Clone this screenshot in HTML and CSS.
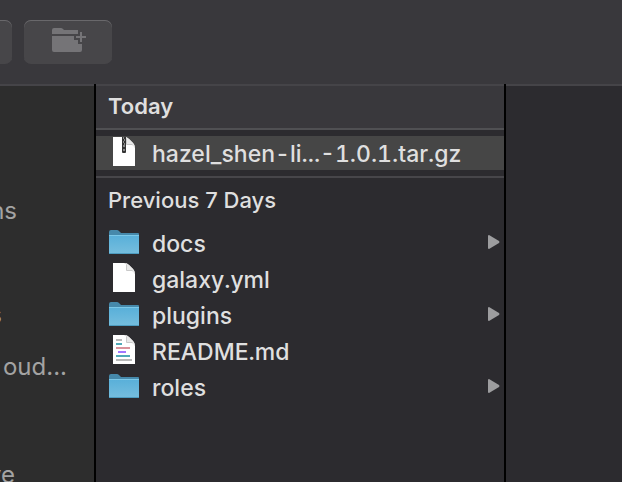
FILE: index.html
```html
<!DOCTYPE html>
<html lang="en">
<head>
<meta charset="UTF-8" />
<title>Finder</title>
<link rel="stylesheet" href="styles.css">
</head>
<body>

<svg class="sprite" aria-hidden="true">
  <linearGradient id="blue" x1="0" y1="0" x2="0" y2="1">
    <stop offset="0" stop-color="#58afd9" />
    <stop offset="1" stop-color="#76bede" />
  </linearGradient>
  <symbol id="folder" viewBox="0 0 32 32">
    <path d="M1 5q0-2 2-2h6q1 0 2 1l2 2h17q1 0 1 1v3H1z" fill="#4689ab" />
    <path d="M1 8h30v18q0 1-1 1H2q-1 0-1-1z" fill="url(#blue)" />
    <path d="M1 8.500h30" stroke="#7cc8e8" />
    <path d="M1 26.500h30" stroke="#4d9cc0" />
  </symbol>
  <symbol id="page" viewBox="0 0 32 32">
    <path d="M5 0h11q3 0 5 2l4 4q2 2 2 5v18H5z" fill="#fff" />
    <path d="M17 0q2 1 2 7 5 0 8 4 0-3-2-5l-4-4q-2-2-4-2z" fill="#e9e9e9" />
    <path d="M18.500 1.500v6h6" fill="none" stroke="#c9c9c9" />
  </symbol>
</svg>

<header class="toolbar">
  <button class="tool tool-cut" aria-label="Action"></button>
  <button class="tool" aria-label="New Folder">
    <svg width="36" height="28" viewBox="0 0 36 28" fill="#757477">
      <path d="M2 8V4q0-2 2-2h7q1 0 2 1l1 1h14v4H2z" />
      <path d="M2 10h22v4h4v4h4v6q0 2-2 2H4q-2 0-2-2z" />
      <path d="M26 8h4v2h-4z" fill="#474649" />
      <path d="M30 6h2v4h4v2h-4v4h-2v-4h-4v-2h4z" />
    </svg>
  </button>
</header>

<main class="browser">
  <nav class="sidebar">
    <a href="#" class="place place-apps">ns</a>
    <a href="#" class="place place-downloads">s</a>
    <a href="#" class="place place-cloud">oud...</a>
    <a href="#" class="place place-drive">ve</a>
  </nav>

  <section class="column">
    <h2 class="group group-today">Today</h2>
    <ul class="files files-today">
      <li>
        <a href="#" class="file selected">
          <svg class="icon" viewBox="0 0 32 32">
            <use href="#page" />
            <path d="M14 0h4v15q0 1-1 1h-2q-1 0-1-1z" fill="#333" />
            <path d="M15 1h1M16 3h1M15 5h1M16 7h1M15 9h2M15 13h2" stroke="#ddd" />
          </svg>
          <span class="name">hazel_shen-li...-1.0.1.tar.gz</span>
        </a>
      </li>
    </ul>

    <h2 class="group">Previous 7 Days</h2>
    <ul class="files">
      <li>
        <a href="#" class="file">
          <svg class="icon"><use href="#folder" /></svg>
          <span class="name">docs</span>
          <svg class="arrow" viewBox="0 0 12 14"><path d="M0 1q0-1 1-1l10 6q1 1 0 2L1 14q-1 0-1-1z" /></svg>
        </a>
      </li>
      <li>
        <a href="#" class="file">
          <svg class="icon"><use href="#page" /></svg>
          <span class="name">galaxy.yml</span>
        </a>
      </li>
      <li>
        <a href="#" class="file">
          <svg class="icon"><use href="#folder" /></svg>
          <span class="name">plugins</span>
          <svg class="arrow" viewBox="0 0 12 14"><path d="M0 1q0-1 1-1l10 6q1 1 0 2L1 14q-1 0-1-1z" /></svg>
        </a>
      </li>
      <li>
        <a href="#" class="file">
          <svg class="icon" viewBox="0 0 32 32">
            <use href="#page" />
            <g stroke-width="2">
              <path d="M8 5h6M8 25h16" stroke="#b8b8b8" />
              <path d="M8 9h6M8 21h14" stroke="#50a9b8" />
              <path d="M8 13h14" stroke="#d9929b" />
              <path d="M10 17h8" stroke="#a277ff" />
            </g>
          </svg>
          <span class="name">README.md</span>
        </a>
      </li>
      <li>
        <a href="#" class="file">
          <svg class="icon"><use href="#folder" /></svg>
          <span class="name">roles</span>
          <svg class="arrow" viewBox="0 0 12 14"><path d="M0 1q0-1 1-1l10 6q1 1 0 2L1 14q-1 0-1-1z" /></svg>
        </a>
      </li>
    </ul>
  </section>

  <section class="preview"></section>
</main>

</body>
</html>
```
FILE: styles.css
```css
* {
  box-sizing: border-box;
}
body {
  margin: 0;
  height: 100vh;
  display: flex;
  flex-direction: column;
  overflow: hidden;
  background: #2c2b2f;
  color: #dfdfdf;
  font-family: Inter, sans-serif;
  font-size: 23px;
  line-height: 36px;
}
a {
  color: inherit;
  text-decoration: none;
}
.sprite {
  position: absolute;
  width: 0;
  height: 0;
}

/* toolbar */
.toolbar {
  display: flex;
  gap: 12px;
  padding: 20px 0;
  background: #39383c;
}
.tool {
  display: flex;
  align-items: center;
  justify-content: center;
  width: 88px;
  height: 44px;
  padding: 0 0 4px;
  border: none;
  border-radius: 7px;
  background: #474649;
  box-shadow: inset 0 1px #69686b;
}
.tool-cut {
  width: 12px;
  border-radius: 0 7px 7px 0;
}

/* columns */
.browser {
  flex: 1;
  display: flex;
  min-height: 0;
}
.sidebar, .column, .preview {
  padding-top: 2px;
  box-shadow: inset 0 2px #454448;
}
.sidebar {
  width: 94px;
  flex: none;
  padding-top: 109px;
  background: #2d2d2d;
  color: #a3a3a3;
  font-size: 24px;
}
.place {
  display: flex;
  justify-content: flex-end;
  height: 36px;
  margin-bottom: 16px;
  overflow: hidden;
}
.place-apps {
  width: 17px;
  margin-bottom: 68px;
}
.place-downloads {
  width: 2px;
}
.place-cloud {
  width: 67px;
  margin-bottom: 72px;
}
.place-drive {
  width: 15px;
}
.column {
  flex: 0 1 412px;
  border: solid #000;
  border-width: 0 2px;
}
.preview {
  flex: 1;
}

/* file list */
.group {
  margin: 0;
  padding: 4px 12px 7px;
  font-size: 22px;
  font-weight: 500;
}
.group-today {
  padding: 2px 12px 4px;
  border-bottom: 2px solid #505053;
  background: #39383c;
  font-weight: 600;
}
.files {
  margin: 0;
  padding: 0;
  list-style: none;
}
.files-today {
  padding: 6px 0;
  border-bottom: 2px solid #47464a;
}
.file {
  display: flex;
  align-items: center;
  gap: 12px;
  height: 36px;
  padding: 0 4px 0 12px;
}
.selected {
  height: 34px;
  background: #464646;
}
.name {
  flex: 1;
  padding-top: 2px;
  font-weight: 500;
  font-variant-numeric: tabular-nums;
  white-space: nowrap;
}
.icon {
  width: 32px;
  height: 32px;
  flex: none;
}
.arrow {
  width: 12px;
  height: 14px;
  margin-bottom: 2px;
  fill: #9d9d9f;
}
```
